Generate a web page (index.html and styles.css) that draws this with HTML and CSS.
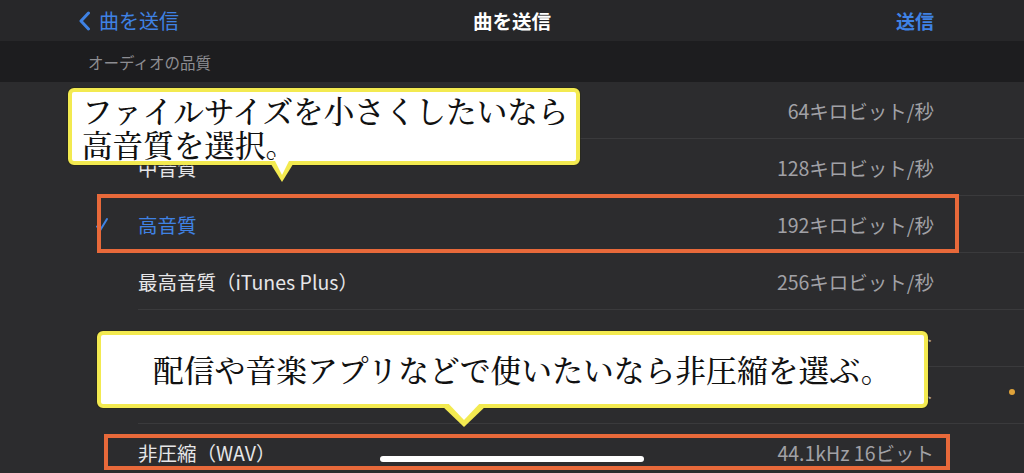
FILE: index.html
```html
<!DOCTYPE html>
<html lang="ja">

<head>
    <meta charset="UTF-8">
    <meta name="viewport" content="width=device-width, initial-scale=1.0">
    <link rel="stylesheet" href="styles.css">
</head>

<body>

    <div id="navbar">
        <a href="#" class="nav-back">
            <svg width="13" height="20" viewBox="0 0 13 20"><path d="M10.5 2 L3 10 L10.5 18" fill="none" stroke="#3f82e4" stroke-width="3" stroke-linecap="round" stroke-linejoin="round"/></svg>
            曲を送信
        </a>
        <div class="nav-title">曲を送信</div>
        <a href="#" class="nav-action">送信</a>
    </div>

    <div class="section-header">オーディオの品質</div>

    <div class="list">
        <div class="row">
            <span class="check"></span>
            <div class="cell"><span class="label">低音質</span><span class="value">64キロビット/秒</span></div>
        </div>
        <div class="row">
            <span class="check"></span>
            <div class="cell"><span class="label">中音質</span><span class="value">128キロビット/秒</span></div>
        </div>
        <div class="row selected">
            <span class="check">
                <svg width="14" height="16" viewBox="0 0 14 16"><path d="M2 9.5 L5 13.5 L12 2" fill="none" stroke="#3f82e4" stroke-width="2" stroke-linecap="round" stroke-linejoin="round"/></svg>
            </span>
            <div class="cell"><span class="label">高音質</span><span class="value">192キロビット/秒</span></div>
        </div>
        <div class="row">
            <span class="check"></span>
            <div class="cell"><span class="label">最高音質（iTunes Plus）</span><span class="value">256キロビット/秒</span></div>
        </div>
        <div class="row">
            <span class="check"></span>
            <div class="cell"><span class="label">Apple Lossless</span><span class="value">44.1kHz 16ビット</span></div>
        </div>
        <div class="row">
            <span class="check"></span>
            <div class="cell"><span class="label">AIFF</span><span class="value">44.1kHz 16ビット</span></div>
        </div>
        <div class="row">
            <span class="check"></span>
            <div class="cell"><span class="label">非圧縮（WAV）</span><span class="value">44.1kHz 16ビット</span></div>
        </div>
    </div>

    <!-- highlight frames -->
    <div class="mark mark-high"></div>
    <div class="mark mark-wav"></div>

    <!-- speech bubbles -->
    <div class="bubble bubble-top">ファイルサイズを小さくしたいなら<br>高音質を選択。</div>
    <div class="bubble bubble-bottom">配信や音楽アプリなどで使いたいなら非圧縮を選ぶ。</div>

    <div class="home-bar"></div>
    <div class="dot"></div>

</body>

</html>
```

FILE: styles.css
```css
body {
    margin: 0;
    padding: 0;
    background-color: #2c2c2e;
    font-family: "Noto Sans CJK JP", "Noto Sans", sans-serif;
    color: #e6e6e8;
    height: 473px;
    overflow: hidden;
    position: relative;
}

a {
    text-decoration: none;
}

#navbar {
    height: 41px;
    background-color: #272729;
    display: grid;
    grid-template-columns: 1fr auto 1fr;
    align-items: center;
}

.nav-back {
    display: flex;
    align-items: center;
    gap: 8px;
    padding-left: 78px;
    color: #3f82e4;
    font-size: 20px;
}

.nav-title {
    color: #fff;
    font-size: 19.5px;
    font-weight: bold;
}

.nav-action {
    justify-self: end;
    padding-right: 90px;
    color: #3f82e4;
    font-size: 19px;
    font-weight: bold;
}

.section-header {
    height: 41px;
    background-color: #1d1d1f;
    color: #8d8d92;
    font-size: 15.5px;
    padding-left: 88px;
    display: flex;
    align-items: center;
    box-sizing: border-box;
    padding-top: 1px;
}

.row {
    display: flex;
    padding-left: 90px;
    height: 57px;
}

.check {
    width: 48px;
    display: flex;
    align-items: center;
    padding-left: 5px;
    box-sizing: border-box;
}

.cell {
    flex: 1;
    display: flex;
    justify-content: space-between;
    align-items: center;
    padding-right: 90px;
    border-bottom: 1px solid #3a3a3c;
    font-size: 19.5px;
}

.row:last-child .cell {
    border-bottom: none;
}

.label {
    color: #e6e6e8;
}

.selected .label {
    color: #3f82e4;
}

.value {
    color: #a1a1a6;
}

/* orange frames over the rows */
.mark {
    position: absolute;
    border: 4px solid #e8693a;
    box-sizing: border-box;
}

.mark-high {
    left: 97px;
    top: 194px;
    width: 862px;
    height: 59px;
}

.mark-wav {
    left: 104px;
    top: 434px;
    width: 846px;
    height: 36px;
}

.bubble {
    position: absolute;
    background-color: #fff;
    border: 4px solid #f3ea50;
    border-radius: 6px;
    box-shadow: 0 0 0 1px rgba(40, 40, 20, 0.6);
    box-sizing: border-box;
    color: #111;
    font-family: "Noto Serif CJK JP", "IPAMincho", "Liberation Serif", "Noto Sans CJK JP", serif;
    font-weight: 500;
    font-size: 30.6px;
    line-height: 37px;
}

.bubble:before,
.bubble:after {
    content: '';
    position: absolute;
    width: 0;
    height: 0;
    border-style: solid;
    border-color: transparent;
}

/* yellow outline of the pointer */
.bubble:before {
    border-top-color: #f3ea50;
}

/* white fill of the pointer */
.bubble:after {
    border-top-color: #fff;
}

.bubble-top {
    left: 68px;
    top: 88px;
    width: 512px;
    height: 77px;
    padding: 1px 0 0 10px;
    line-height: 34px;
}

.bubble-top:before {
    left: 197px;
    top: 100%;
    border-width: 21px 13px 0 13px;
}

.bubble-top:after {
    left: 201px;
    top: calc(100% - 4px);
    border-width: 18px 9px 0 9px;
}

.bubble-bottom {
    left: 97px;
    top: 331px;
    width: 831px;
    height: 77px;
    padding: 0 0 0 52px;
    display: flex;
    align-items: center;
    font-size: 30.8px;
}

.bubble-bottom:before {
    left: 339px;
    top: 100%;
    border-width: 23px 24px 0 24px;
}

.bubble-bottom:after {
    left: 344px;
    top: calc(100% - 4px);
    border-width: 20px 19px 0 19px;
}

.home-bar {
    position: absolute;
    left: 380px;
    top: 456px;
    width: 264px;
    height: 6px;
    border-radius: 3px;
    background-color: #fff;
}

.dot {
    position: absolute;
    left: 1009px;
    top: 389px;
    width: 6px;
    height: 6px;
    border-radius: 50%;
    background-color: #e0a33a;
}
```
